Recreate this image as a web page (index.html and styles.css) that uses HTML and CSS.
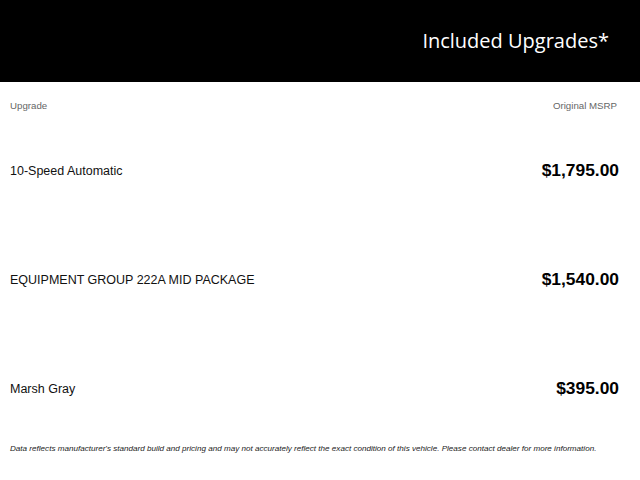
FILE: index.html
```html
<!DOCTYPE html>
<html>
<head>
<meta charset="utf-8">
<link rel="stylesheet" href="styles.css">
</head>
<body>
<div class="header"><h1 class="title">Included Upgrades*</h1></div>
<div class="labels"><span>Upgrade</span><span>Original MSRP</span></div>
<div class="rows">
  <div class="row"><span class="name">10-Speed Automatic</span><span class="price">$1,795.00</span></div>
  <div class="row"><span class="name">EQUIPMENT GROUP 222A MID PACKAGE</span><span class="price">$1,540.00</span></div>
  <div class="row"><span class="name">Marsh Gray</span><span class="price">$395.00</span></div>
</div>
<p class="note">Data reflects manufacturer's standard build and pricing and may not accurately reflect the exact condition of this vehicle. Please contact dealer for more information.</p>
</body>
</html>
```
FILE: styles.css
```css
* { box-sizing: border-box; }
body { margin: 0; background: #fff; font-family: "Liberation Sans", Arial, sans-serif; color: #111; width: 640px; height: 480px; overflow: hidden; }
.header { background: #000; height: 82px; display: flex; align-items: center; justify-content: flex-end; padding-right: 31px; }
.title { margin: 0; color: #fff; font-family: "Open Sans", sans-serif; font-weight: 400; font-size: 20px; line-height: 24px; }
.labels { display: flex; justify-content: space-between; padding: 17px 23px 0 10px; font-size: 9.7px; line-height: 14px; color: #666; }
.rows { padding-top: 3px; }
.row { height: 109px; display: flex; justify-content: space-between; align-items: center; padding: 0 21px 0 10px; }
.name { font-size: 12.5px; color: #111; }
.price { font-size: 17.4px; font-weight: 700; color: #000; }
.note { margin: 0; padding: 0 10px; font-size: 8.1px; line-height: 12px; font-style: italic; color: #222; white-space: nowrap; }
```
